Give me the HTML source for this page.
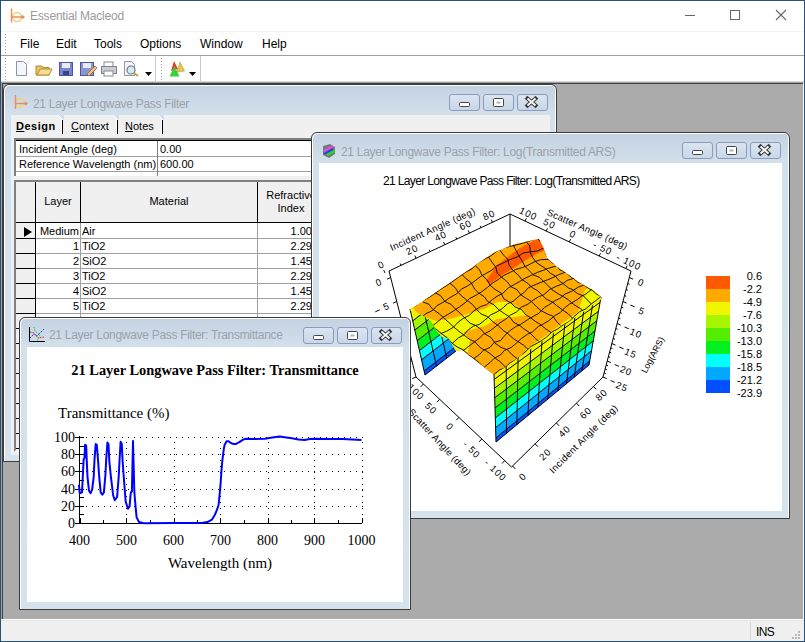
<!DOCTYPE html><html><head><meta charset="utf-8"><style>
*{margin:0;padding:0;box-sizing:border-box}
html,body{width:805px;height:642px;overflow:hidden;background:#fff;font-family:"Liberation Sans",sans-serif;position:relative}
.a{position:absolute}
.t{position:absolute;white-space:nowrap;line-height:1}
</style></head><body><div class="a" style="left:0;top:0;width:805px;height:642px;border:1px solid #2b5274"></div><svg class="a" style="left:8px;top:7px" width="18" height="18" viewBox="0 0 18 18"><circle cx="9" cy="10" r="4.5" fill="none" stroke="#f3d36a" stroke-width="1.5"/><path d="M3.5 1.5V15.5M3.5 10H16M14 8.5L16 10L14 11.5" stroke="#e88b6f" stroke-width="1.4" fill="none"/></svg><div class="t" style="left:30px;top:10px;font-size:12px;color:#9a9a9a;letter-spacing:-0.2px">Essential Macleod</div><div class="a" style="left:685px;top:15px;width:10px;height:1px;background:#666"></div><div class="a" style="left:730px;top:10px;width:10px;height:10px;border:1px solid #666"></div><svg class="a" style="left:775px;top:9px" width="12" height="12"><path d="M1 1L11 11M11 1L1 11" stroke="#666" stroke-width="1.1"/></svg><div class="a" style="left:1px;top:31px;width:803px;height:1px;background:#f1f3f8"></div><div class="a" style="left:5px;top:34px;width:1px;height:1px;background:#999"></div><div class="a" style="left:5px;top:37px;width:1px;height:1px;background:#999"></div><div class="a" style="left:5px;top:40px;width:1px;height:1px;background:#999"></div><div class="a" style="left:5px;top:43px;width:1px;height:1px;background:#999"></div><div class="a" style="left:5px;top:46px;width:1px;height:1px;background:#999"></div><div class="a" style="left:5px;top:49px;width:1px;height:1px;background:#999"></div><div class="a" style="left:5px;top:52px;width:1px;height:1px;background:#999"></div><div class="a" style="left:5px;top:55px;width:1px;height:1px;background:#999"></div><div class="t" style="left:20px;top:38px;font-size:12px;color:#000">File</div><div class="t" style="left:56px;top:38px;font-size:12px;color:#000">Edit</div><div class="t" style="left:94px;top:38px;font-size:12px;color:#000">Tools</div><div class="t" style="left:140px;top:38px;font-size:12px;color:#000">Options</div><div class="t" style="left:200px;top:38px;font-size:12px;color:#000">Window</div><div class="t" style="left:262px;top:38px;font-size:12px;color:#000">Help</div><div class="a" style="left:1px;top:55px;width:803px;height:1px;background:#a0a0a0"></div><div class="a" style="left:5px;top:58px;width:1px;height:1px;background:#999"></div><div class="a" style="left:161px;top:58px;width:1px;height:1px;background:#999"></div><div class="a" style="left:5px;top:61px;width:1px;height:1px;background:#999"></div><div class="a" style="left:161px;top:61px;width:1px;height:1px;background:#999"></div><div class="a" style="left:5px;top:64px;width:1px;height:1px;background:#999"></div><div class="a" style="left:161px;top:64px;width:1px;height:1px;background:#999"></div><div class="a" style="left:5px;top:67px;width:1px;height:1px;background:#999"></div><div class="a" style="left:161px;top:67px;width:1px;height:1px;background:#999"></div><div class="a" style="left:5px;top:70px;width:1px;height:1px;background:#999"></div><div class="a" style="left:161px;top:70px;width:1px;height:1px;background:#999"></div><div class="a" style="left:5px;top:73px;width:1px;height:1px;background:#999"></div><div class="a" style="left:161px;top:73px;width:1px;height:1px;background:#999"></div><div class="a" style="left:5px;top:76px;width:1px;height:1px;background:#999"></div><div class="a" style="left:161px;top:76px;width:1px;height:1px;background:#999"></div><div class="a" style="left:5px;top:79px;width:1px;height:1px;background:#999"></div><div class="a" style="left:161px;top:79px;width:1px;height:1px;background:#999"></div><div class="a" style="left:155px;top:56px;width:1px;height:25px;background:#c8c8c8"></div><div class="a" style="left:200px;top:56px;width:1px;height:25px;background:#c8c8c8"></div><svg class="a" style="left:14px;top:60px" width="190" height="20"><path d="M2.5 1.5H9.5L12.5 4.5V15.5H2.5Z" fill="#f4f6fb" stroke="#8b93aa"/><path d="M22 6H28L29 7.5H35V15H22Z" fill="#e9c46a" stroke="#b58a2c"/><path d="M23 15L26 9H38L35 15Z" fill="#f6dd92" stroke="#b58a2c"/><rect x="45.5" y="2.5" width="13" height="13" fill="#7c86cc" stroke="#4b55a0"/><rect x="48" y="3" width="8" height="5" fill="#e8ebf5"/><rect x="49" y="11" width="6" height="4" fill="#3c4580"/><rect x="66.5" y="2.5" width="13" height="13" fill="#8c96d0" stroke="#4b55a0"/><rect x="69" y="3" width="8" height="5" fill="#e8ebf5"/><path d="M73 14L81 6L83 8L75 16Z" fill="#f0c080" stroke="#a0603a" stroke-width="0.8"/><rect x="90" y="2" width="9" height="5" fill="#fff" stroke="#888"/><rect x="87.5" y="6.5" width="15" height="7" fill="#c9cdd4" stroke="#7d828a"/><rect x="90" y="11" width="9" height="5" fill="#fff" stroke="#888"/><path d="M110.5 1.5H117.5L120.5 4.5V15.5H110.5Z" fill="#f4f6fb" stroke="#8b93aa"/><circle cx="117" cy="10" r="4" fill="#dbe9f6" stroke="#777" stroke-width="1.2"/><path d="M120 13L124 16" stroke="#c9a040" stroke-width="2"/><path d="M131 12H138L134.5 16Z" fill="#000"/><path d="M163 12L166 2L170.5 11Z" fill="#e2c94e" stroke="#b09a30" stroke-width="0.6"/><path d="M157 11L160 1L164 9Z" fill="#e03a2a"/><path d="M155.5 16.5L160.5 6L165.5 16.5Z" fill="#3ad23a"/><path d="M175 12H182L178.5 16Z" fill="#000"/></svg><div class="a" style="left:1px;top:81px;width:803px;height:1px;background:#d9d9d9"></div><div class="a" style="left:1px;top:82px;width:803px;height:537px;background:#ababab;border-top:1px solid #a0a0a0;border-left:1px solid #a0a0a0;border-right:1px solid #fff"></div><div class="a" style="left:2px;top:83px;width:801px;height:1px;background:#404040"></div><div class="a" style="left:2px;top:83px;width:1px;height:536px;background:#404040"></div><div class="a" style="left:1px;top:619px;width:803px;height:22px;background:#f0f0f0;border-top:1px solid #fff"></div><div class="a" style="left:1px;top:620px;width:803px;height:1px;background:#e3e3e3"></div><div class="a" style="left:750px;top:622px;width:1px;height:18px;background:#d7d7d7"></div><div class="t" style="left:756px;top:626px;font-size:12px;color:#000;letter-spacing:-0.6px">INS</div><div class="a" style="left:798px;top:637px;width:2px;height:2px;background:#b8b8b8"></div><div class="a" style="left:798px;top:634px;width:2px;height:2px;background:#b8b8b8"></div><div class="a" style="left:798px;top:631px;width:2px;height:2px;background:#b8b8b8"></div><div class="a" style="left:795px;top:637px;width:2px;height:2px;background:#b8b8b8"></div><div class="a" style="left:795px;top:634px;width:2px;height:2px;background:#b8b8b8"></div><div class="a" style="left:792px;top:637px;width:2px;height:2px;background:#b8b8b8"></div><div class="a" style="left:3px;top:84px;width:554px;height:378px;border:1px solid #3c3c3c;border-radius:6px 6px 0 0;background:linear-gradient(#c3d1e2,#d3e1ec 30px,#d6e3ec);box-shadow:inset 1px 1px 0 #fff,inset -1px 0 0 #fff"></div><div class="t" style="left:33px;top:98px;font-size:12px;color:#9aa2aa;letter-spacing:-0.3px">21 Layer Longwave Pass Filter</div><div class="a" style="left:449px;top:94px;width:31px;height:17px;border:1px solid #8a9bbf;border-radius:3px;background:linear-gradient(#dbe5f1,#c8d6e6)"></div><div class="a" style="left:483px;top:94px;width:31px;height:17px;border:1px solid #8a9bbf;border-radius:3px;background:linear-gradient(#dbe5f1,#c8d6e6)"></div><div class="a" style="left:517px;top:94px;width:31px;height:17px;border:1px solid #8a9bbf;border-radius:3px;background:linear-gradient(#dbe5f1,#c8d6e6)"></div><svg class="a" style="left:449px;top:94px" width="100" height="17"><rect x="10.5" y="8.5" width="10" height="4" fill="#fff" stroke="#444" rx="1"/><rect x="44.5" y="4.5" width="10" height="8" fill="#fff" stroke="#444" rx="1"/><rect x="47.5" y="7.5" width="4" height="2" fill="#a7b3c7"/><path d="M78.5 4.5L86.5 11.5M86.5 4.5L78.5 11.5" stroke="#3a3a3a" stroke-width="4" stroke-linecap="square"/><path d="M78.5 4.5L86.5 11.5M86.5 4.5L78.5 11.5" stroke="#f8f8f8" stroke-width="2"/></svg><svg class="a" style="left:11px;top:93px" width="18" height="18"><circle cx="9" cy="10" r="4.5" fill="none" stroke="#f3d36a" stroke-width="1.5"/><path d="M4.5 2V16M4.5 10.5H16M14 9L16 10.5L14 12" stroke="#e88b6f" stroke-width="1.4" fill="none"/></svg><div class="a" style="left:11px;top:115px;width:539px;height:340px;background:#f0f0f0"></div><svg class="a" style="left:58px;top:115px" width="6" height="6"><path d="M0 0H6V6Z" fill="#d3e0ea"/><path d="M0 0L5 5" stroke="#fff" stroke-width="1"/></svg><svg class="a" style="left:113px;top:115px" width="6" height="6"><path d="M0 0H6V6Z" fill="#d3e0ea"/><path d="M0 0L5 5" stroke="#fff" stroke-width="1"/></svg><svg class="a" style="left:158px;top:115px" width="6" height="6"><path d="M0 0H6V6Z" fill="#d3e0ea"/><path d="M0 0L5 5" stroke="#fff" stroke-width="1"/></svg><div class="t" style="left:16px;top:121px;font-size:11px;font-weight:bold;color:#000;letter-spacing:0.5px"><u>D</u>esign</div><div class="t" style="left:71px;top:121px;font-size:11px;color:#000"><u>C</u>ontext</div><div class="t" style="left:125px;top:121px;font-size:11px;color:#000"><u>N</u>otes</div><div class="a" style="left:62px;top:120px;width:1px;height:14px;background:#000"></div><div class="a" style="left:61px;top:120px;width:1px;height:14px;background:#fff"></div><div class="a" style="left:117px;top:120px;width:1px;height:14px;background:#000"></div><div class="a" style="left:116px;top:120px;width:1px;height:14px;background:#fff"></div><div class="a" style="left:162px;top:120px;width:1px;height:14px;background:#000"></div><div class="a" style="left:161px;top:120px;width:1px;height:14px;background:#fff"></div><div class="a" style="left:14px;top:138px;width:300px;height:38px;background:#fff;border-top:2px solid #808080;border-left:2px solid #808080"></div><div class="a" style="left:16px;top:140px;width:298px;height:1px;background:#000"></div><div class="a" style="left:16px;top:156px;width:298px;height:1px;background:#a0a0a0"></div><div class="a" style="left:16px;top:171px;width:298px;height:1px;background:#a0a0a0"></div><div class="a" style="left:157px;top:141px;width:1px;height:35px;background:#808080"></div><div class="t" style="left:19px;top:144px;font-size:11px;color:#000">Incident Angle (deg)</div><div class="t" style="left:160px;top:144px;font-size:11px;color:#000">0.00</div><div class="t" style="left:19px;top:159px;font-size:11px;color:#000">Reference Wavelength (nm)</div><div class="t" style="left:160px;top:159px;font-size:11px;color:#000">600.00</div><div class="a" style="left:14px;top:180px;width:300px;height:272px;background:#fff;border-top:2px solid #808080;border-left:2px solid #808080;border-bottom:2px solid #fff"></div><div class="a" style="left:16px;top:182px;width:298px;height:41px;background:#f0f0f0"></div><div class="a" style="left:16px;top:182px;width:19px;height:268px;background:#f0f0f0"></div><div class="a" style="left:16px;top:222px;width:298px;height:1px;background:#000"></div><div class="a" style="left:35px;top:182px;width:1px;height:41px;background:#000"></div><div class="a" style="left:80px;top:182px;width:1px;height:41px;background:#000"></div><div class="a" style="left:257px;top:182px;width:1px;height:41px;background:#000"></div><div class="a" style="left:35px;top:223px;width:1px;height:227px;background:#000"></div><div class="a" style="left:80px;top:223px;width:1px;height:227px;background:#a0a0a0"></div><div class="a" style="left:257px;top:223px;width:1px;height:227px;background:#a0a0a0"></div><div class="a" style="left:36px;top:238px;width:278px;height:1px;background:#a0a0a0"></div><div class="a" style="left:16px;top:238px;width:19px;height:1px;background:#000"></div><div class="t" style="left:36px;top:226px;width:43px;text-align:right;font-size:11px;color:#000">Medium</div><div class="t" style="left:82px;top:226px;font-size:11px;color:#000">Air</div><div class="t" style="left:257px;top:226px;width:55px;text-align:right;font-size:11px;color:#000">1.00</div><div class="a" style="left:36px;top:253px;width:278px;height:1px;background:#a0a0a0"></div><div class="a" style="left:16px;top:253px;width:19px;height:1px;background:#000"></div><div class="t" style="left:36px;top:241px;width:43px;text-align:right;font-size:11px;color:#000">1</div><div class="t" style="left:82px;top:241px;font-size:11px;color:#000">TiO2</div><div class="t" style="left:257px;top:241px;width:55px;text-align:right;font-size:11px;color:#000">2.29</div><div class="a" style="left:36px;top:268px;width:278px;height:1px;background:#a0a0a0"></div><div class="a" style="left:16px;top:268px;width:19px;height:1px;background:#000"></div><div class="t" style="left:36px;top:256px;width:43px;text-align:right;font-size:11px;color:#000">2</div><div class="t" style="left:82px;top:256px;font-size:11px;color:#000">SiO2</div><div class="t" style="left:257px;top:256px;width:55px;text-align:right;font-size:11px;color:#000">1.45</div><div class="a" style="left:36px;top:283px;width:278px;height:1px;background:#a0a0a0"></div><div class="a" style="left:16px;top:283px;width:19px;height:1px;background:#000"></div><div class="t" style="left:36px;top:271px;width:43px;text-align:right;font-size:11px;color:#000">3</div><div class="t" style="left:82px;top:271px;font-size:11px;color:#000">TiO2</div><div class="t" style="left:257px;top:271px;width:55px;text-align:right;font-size:11px;color:#000">2.29</div><div class="a" style="left:36px;top:298px;width:278px;height:1px;background:#a0a0a0"></div><div class="a" style="left:16px;top:298px;width:19px;height:1px;background:#000"></div><div class="t" style="left:36px;top:286px;width:43px;text-align:right;font-size:11px;color:#000">4</div><div class="t" style="left:82px;top:286px;font-size:11px;color:#000">SiO2</div><div class="t" style="left:257px;top:286px;width:55px;text-align:right;font-size:11px;color:#000">1.45</div><div class="a" style="left:36px;top:313px;width:278px;height:1px;background:#a0a0a0"></div><div class="a" style="left:16px;top:313px;width:19px;height:1px;background:#000"></div><div class="t" style="left:36px;top:301px;width:43px;text-align:right;font-size:11px;color:#000">5</div><div class="t" style="left:82px;top:301px;font-size:11px;color:#000">TiO2</div><div class="t" style="left:257px;top:301px;width:55px;text-align:right;font-size:11px;color:#000">2.29</div><div class="a" style="left:36px;top:328px;width:278px;height:1px;background:#a0a0a0"></div><div class="a" style="left:16px;top:328px;width:19px;height:1px;background:#000"></div><div class="t" style="left:36px;top:316px;width:43px;text-align:right;font-size:11px;color:#000">6</div><div class="t" style="left:82px;top:316px;font-size:11px;color:#000">SiO2</div><div class="t" style="left:257px;top:316px;width:55px;text-align:right;font-size:11px;color:#000">1.45</div><div class="a" style="left:36px;top:343px;width:278px;height:1px;background:#a0a0a0"></div><div class="a" style="left:16px;top:343px;width:19px;height:1px;background:#000"></div><div class="t" style="left:36px;top:331px;width:43px;text-align:right;font-size:11px;color:#000">7</div><div class="t" style="left:82px;top:331px;font-size:11px;color:#000">TiO2</div><div class="t" style="left:257px;top:331px;width:55px;text-align:right;font-size:11px;color:#000">2.29</div><div class="a" style="left:36px;top:358px;width:278px;height:1px;background:#a0a0a0"></div><div class="a" style="left:16px;top:358px;width:19px;height:1px;background:#000"></div><div class="t" style="left:36px;top:346px;width:43px;text-align:right;font-size:11px;color:#000">8</div><div class="t" style="left:82px;top:346px;font-size:11px;color:#000">SiO2</div><div class="t" style="left:257px;top:346px;width:55px;text-align:right;font-size:11px;color:#000">1.45</div><div class="a" style="left:36px;top:373px;width:278px;height:1px;background:#a0a0a0"></div><div class="a" style="left:16px;top:373px;width:19px;height:1px;background:#000"></div><div class="t" style="left:36px;top:361px;width:43px;text-align:right;font-size:11px;color:#000">9</div><div class="t" style="left:82px;top:361px;font-size:11px;color:#000">TiO2</div><div class="t" style="left:257px;top:361px;width:55px;text-align:right;font-size:11px;color:#000">2.29</div><div class="a" style="left:36px;top:388px;width:278px;height:1px;background:#a0a0a0"></div><div class="a" style="left:16px;top:388px;width:19px;height:1px;background:#000"></div><div class="t" style="left:36px;top:376px;width:43px;text-align:right;font-size:11px;color:#000">10</div><div class="t" style="left:82px;top:376px;font-size:11px;color:#000">SiO2</div><div class="t" style="left:257px;top:376px;width:55px;text-align:right;font-size:11px;color:#000">1.45</div><div class="a" style="left:36px;top:403px;width:278px;height:1px;background:#a0a0a0"></div><div class="a" style="left:16px;top:403px;width:19px;height:1px;background:#000"></div><div class="t" style="left:36px;top:391px;width:43px;text-align:right;font-size:11px;color:#000">11</div><div class="t" style="left:82px;top:391px;font-size:11px;color:#000">TiO2</div><div class="t" style="left:257px;top:391px;width:55px;text-align:right;font-size:11px;color:#000">2.29</div><div class="a" style="left:36px;top:418px;width:278px;height:1px;background:#a0a0a0"></div><div class="a" style="left:16px;top:418px;width:19px;height:1px;background:#000"></div><div class="t" style="left:36px;top:406px;width:43px;text-align:right;font-size:11px;color:#000">12</div><div class="t" style="left:82px;top:406px;font-size:11px;color:#000">SiO2</div><div class="t" style="left:257px;top:406px;width:55px;text-align:right;font-size:11px;color:#000">1.45</div><div class="a" style="left:36px;top:433px;width:278px;height:1px;background:#a0a0a0"></div><div class="a" style="left:16px;top:433px;width:19px;height:1px;background:#000"></div><div class="t" style="left:36px;top:421px;width:43px;text-align:right;font-size:11px;color:#000">13</div><div class="t" style="left:82px;top:421px;font-size:11px;color:#000">TiO2</div><div class="t" style="left:257px;top:421px;width:55px;text-align:right;font-size:11px;color:#000">2.29</div><div class="a" style="left:36px;top:448px;width:278px;height:1px;background:#a0a0a0"></div><div class="a" style="left:16px;top:448px;width:19px;height:1px;background:#000"></div><div class="t" style="left:36px;top:436px;width:43px;text-align:right;font-size:11px;color:#000">14</div><div class="t" style="left:82px;top:436px;font-size:11px;color:#000">SiO2</div><div class="t" style="left:257px;top:436px;width:55px;text-align:right;font-size:11px;color:#000">1.45</div><svg class="a" style="left:23px;top:226px" width="10" height="12"><path d="M1 1L9 6L1 11Z" fill="#000"/></svg><div class="t" style="left:36px;top:196px;width:44px;text-align:center;font-size:11px;color:#000">Layer</div><div class="t" style="left:81px;top:196px;width:176px;text-align:center;font-size:11px;color:#000">Material</div><div class="t" style="left:256px;top:189px;width:70px;text-align:center;font-size:11px;line-height:13px;color:#000">Refractive<br>Index</div><div class="a" style="left:311px;top:132px;width:479px;height:387px;border:1px solid #3c3c3c;border-radius:6px 6px 0 0;background:linear-gradient(#c3d1e2,#d3e1ec 30px,#d6e3ec);box-shadow:inset 1px 1px 0 #fff,inset -1px 0 0 #fff"></div><svg class="a" style="left:321px;top:143px" width="16" height="16"><path d="M2 3L9 1L14 4L14 11L8 15L2 12Z" fill="#777"/><path d="M3 8L12 3" stroke="#ff40ff" stroke-width="2"/><path d="M3 11L12 6" stroke="#2040ff" stroke-width="2"/><path d="M6 12L14 8" stroke="#20e020" stroke-width="2"/></svg><div class="t" style="left:341px;top:146px;font-size:12px;color:#9aa2aa;letter-spacing:-0.3px">21 Layer Longwave Pass Filter: Log(Transmitted ARS)</div><div class="a" style="left:682px;top:142px;width:31px;height:17px;border:1px solid #8a9bbf;border-radius:3px;background:linear-gradient(#dbe5f1,#c8d6e6)"></div><div class="a" style="left:716px;top:142px;width:31px;height:17px;border:1px solid #8a9bbf;border-radius:3px;background:linear-gradient(#dbe5f1,#c8d6e6)"></div><div class="a" style="left:750px;top:142px;width:31px;height:17px;border:1px solid #8a9bbf;border-radius:3px;background:linear-gradient(#dbe5f1,#c8d6e6)"></div><svg class="a" style="left:682px;top:142px" width="100" height="17"><rect x="10.5" y="8.5" width="10" height="4" fill="#fff" stroke="#444" rx="1"/><rect x="44.5" y="4.5" width="10" height="8" fill="#fff" stroke="#444" rx="1"/><rect x="47.5" y="7.5" width="4" height="2" fill="#a7b3c7"/><path d="M78.5 4.5L86.5 11.5M86.5 4.5L78.5 11.5" stroke="#3a3a3a" stroke-width="4" stroke-linecap="square"/><path d="M78.5 4.5L86.5 11.5M86.5 4.5L78.5 11.5" stroke="#f8f8f8" stroke-width="2"/></svg><div class="a" style="left:319px;top:163px;width:463px;height:348px;background:#fff"></div><div class="t" style="left:383px;top:175px;font-size:12px;color:#000;letter-spacing:-0.65px">21 Layer Longwave Pass Filter: Log(Transmitted ARS)</div><svg class="a" style="left:319px;top:163px" width="463" height="348"><g transform="translate(-319,-163)"><path d="M389 271L510 214L631 271M510 214V246M389 271L416 377L511.5 467L603 377L631 271" stroke="#000" stroke-width="1" fill="none"/><clipPath id="wl"><polygon points="409.0,308.0 440.0,300.0 470.0,330.0 457.0,352.0 424.0,376.0"/></clipPath><g clip-path="url(#wl)"><polygon points="410.0,309.0 441.0,285.0 443.7,296.9 412.7,320.9" fill="#f0f500"/><polygon points="412.7,320.9 443.7,296.9 445.8,306.1 414.8,330.1" fill="#a8f500"/><polygon points="414.8,330.1 445.8,306.1 448.2,316.7 417.2,340.7" fill="#55ee00"/><polygon points="417.2,340.7 448.2,316.7 450.4,326.6 419.4,350.6" fill="#00f020"/><polygon points="419.4,350.6 450.4,326.6 452.6,335.8 421.6,359.8" fill="#00ffff"/><polygon points="421.6,359.8 452.6,335.8 455.1,347.0 424.1,371.0" fill="#00a8ff"/><polygon points="424.1,371.0 455.1,347.0 456.0,351.0 425.0,375.0" fill="#0050ff"/><path d="M412.7 320.9L443.7 296.9M414.8 330.1L445.8 306.1M417.2 340.7L448.2 316.7M419.4 350.6L450.4 326.6M421.6 359.8L452.6 335.8M424.1 371.0L455.1 347.0M421.5 300.1L436.5 366.1M431.7 292.2L446.7 358.2" stroke="#000" stroke-width="1" fill="none"/></g><path d="M410 309L425 375L456 351" stroke="#000" stroke-width="1" fill="none"/><polygon points="494.0,374.0 601.0,297.0 598.5,311.3 494.4,388.3" fill="#f0f500"/><polygon points="494.4,388.3 598.5,311.3 596.8,320.8 494.7,397.8" fill="#a8f500"/><polygon points="494.7,397.8 596.8,320.8 595.0,331.0 495.0,408.0" fill="#55ee00"/><polygon points="495.0,408.0 595.0,331.0 593.3,340.9 495.3,417.9" fill="#00f020"/><polygon points="495.3,417.9 593.3,340.9 591.5,350.7 495.6,427.7" fill="#00ffff"/><polygon points="495.6,427.7 591.5,350.7 589.7,360.9 495.9,437.9" fill="#00a8ff"/><polygon points="495.9,437.9 589.7,360.9 589.0,365.0 496.0,442.0" fill="#0050ff"/><path d="M494.2 379.4L600.0 302.4M494.4 388.3L598.5 311.3M494.7 397.8L596.8 320.8M495.0 408.0L595.0 331.0M495.3 417.9L593.3 340.9M495.6 427.7L591.5 350.7M495.9 437.9L589.7 360.9M494.0 374.0L496.0 442.0M506.2 365.2L506.6 433.2M518.1 356.7L516.9 424.7M530.8 347.5L528.0 415.5M542.1 339.4L537.9 407.4M553.6 331.1L547.8 399.1M565.0 322.9L557.8 390.9M575.1 315.6L566.5 383.6M584.0 309.2L574.2 377.2M592.9 302.9L581.9 370.9M601.0 297.0L589.0 365.0M496 442L589 365" stroke="#000" stroke-width="1" fill="none"/><clipPath id="ts"><polygon points="410.0,310.0 493.0,253.0 515.0,244.0 539.0,239.0 543.0,247.0 547.0,258.0 556.0,266.0 569.0,275.0 580.0,283.0 593.0,290.0 601.0,297.0 601.0,299.0 494.0,375.0 462.0,350.0 456.0,351.0 448.6,338.6 442.0,337.0 436.0,330.0 431.0,321.0 423.7,316.0"/></clipPath><polygon points="410.0,310.0 493.0,253.0 515.0,244.0 539.0,239.0 543.0,247.0 547.0,258.0 556.0,266.0 569.0,275.0 580.0,283.0 593.0,290.0 601.0,297.0 601.0,299.0 494.0,375.0 462.0,350.0 456.0,351.0 448.6,338.6 442.0,337.0 436.0,330.0 431.0,321.0 423.7,316.0" fill="#ffaa00"/><g clip-path="url(#ts)"><polygon points="486.0,281.0 497.0,265.0 520.0,248.0 535.0,240.0 541.0,238.0 546.0,250.0 536.0,254.0 523.0,262.0 499.0,277.0 490.0,284.0" fill="#ff5a00"/><polygon points="405.0,305.0 423.0,316.0 436.0,321.0 452.0,318.6 485.0,308.7 497.0,302.0 508.0,302.0 520.0,308.0 527.0,315.0 515.0,317.0 497.0,319.0 485.0,326.0 463.6,332.0 470.0,340.0 468.0,352.0 450.0,352.0 440.0,335.0 420.0,330.0" fill="#f0f500"/><polygon points="601.0,280.0 601.0,302.0 590.0,312.0 570.0,325.0 545.0,345.0 525.0,360.0 520.0,357.0 540.0,340.0 560.0,325.0 578.0,312.0 582.0,300.0 585.0,290.0" fill="#f0f500"/><polygon points="528.0,356.0 560.0,334.0 590.0,310.0 601.0,301.0 601.0,297.0 590.0,303.0 560.0,326.0 525.0,350.0" fill="#f0f500"/><polygon points="395.0,300.0 412.0,306.0 420.0,318.0 410.0,326.0" fill="#f0f500"/><path d="M409.4 310.1L414.9 314.3L420.8 317.1L424.6 323.0L430.4 325.6L437.4 330.2L442.3 334.3L447.1 337.6L452.3 343.4L457.3 347.1L462.9 349.6L468.4 354.9L472.5 357.6L479.1 362.7L484.0 367.8L489.3 371.9L493.7 375.7M423.0 302.0L429.0 304.3L432.2 308.8L439.1 313.6L443.3 317.5L448.2 321.8L453.0 326.4L458.8 331.2L464.2 335.3L469.8 339.5L474.6 341.6L480.3 347.6L485.6 350.6L490.4 353.8L495.9 358.6L499.8 361.5L506.3 367.8M435.1 292.8L440.6 295.7L445.0 301.6L451.0 304.3L455.1 308.7L460.5 313.5L465.9 319.2L470.2 323.3L474.9 325.1L480.8 329.1L485.0 334.0L491.1 337.5L495.0 343.2L500.9 347.3L507.5 349.9L511.6 354.3L517.1 358.7M449.7 283.1L455.1 287.5L458.3 292.6L462.1 296.3L468.3 301.4L472.3 304.3L477.0 309.9L481.1 314.0L487.7 316.7L492.9 321.7L498.1 325.5L503.3 330.5L506.8 332.8L513.6 338.8L517.8 341.4L523.7 345.3L528.1 349.4M461.9 274.4L465.9 278.6L471.2 282.6L474.7 289.2L478.3 292.7L484.4 296.9L487.8 301.6L494.1 304.9L498.3 309.4L504.6 313.7L509.8 317.1L513.6 322.3L520.1 325.7L523.7 328.7L529.7 332.7L535.3 338.4L538.7 341.3M475.6 265.8L479.6 270.0L481.8 274.9L487.1 279.9L490.0 285.1L495.0 289.4L501.0 293.0L503.9 298.9L511.0 303.0L515.0 307.0L521.2 309.3L525.8 314.8L530.8 317.9L535.1 321.2L540.2 324.3L545.9 329.0L551.3 332.7M488.6 257.2L492.4 262.8L495.9 267.2L497.1 272.8L501.2 276.8L507.1 281.7L511.3 287.0L516.8 289.5L520.9 294.8L526.5 298.6L531.1 301.2L536.6 306.8L540.8 310.5L547.8 314.2L552.8 316.0L557.2 322.3L560.5 325.2M499.8 250.1L503.6 255.1L507.7 259.2L509.0 264.9L512.5 269.9L519.2 276.0L521.7 279.4L527.2 282.9L532.2 287.6L537.7 290.8L541.6 294.6L546.4 299.2L552.9 302.4L556.5 305.4L562.4 309.9L568.0 313.6L572.7 318.4M512.8 244.5L516.1 250.5L518.8 255.7L521.6 260.0L524.8 266.2L528.2 269.7L533.5 274.9L539.6 277.4L544.3 282.1L547.6 285.1L552.0 289.7L558.0 293.7L563.3 296.6L568.2 299.7L571.8 303.0L576.1 306.0L582.5 309.9M525.2 240.7L529.9 245.9L530.4 252.7L532.9 257.9L536.9 262.9L541.9 266.2L545.8 268.7L550.4 273.3L554.9 275.7L559.6 281.2L562.6 283.2L568.4 287.9L572.4 289.5L577.4 293.5L583.5 295.9L587.0 299.8L591.2 303.7M538.0 239.0L542.6 243.7L544.3 248.1L546.0 254.6L548.3 258.9L552.0 262.8L557.1 265.2L559.6 269.8L566.1 272.3L569.4 275.9L573.2 278.1L577.7 282.1L582.7 284.0L588.4 288.3L592.2 290.3L596.7 294.2L601.2 296.4M409.3 308.9L416.1 305.5L421.5 301.2L428.0 298.0L433.7 294.3L440.7 289.2L446.8 285.5L453.8 280.6L459.1 276.8L466.1 271.8L472.0 268.9L477.5 263.0L483.0 259.9L490.2 256.3L497.2 251.0L502.5 248.2L509.4 246.5L518.0 244.5L523.8 242.9L531.3 240.3L539.5 238.0M419.5 318.9L425.9 313.7L432.5 310.5L437.0 305.6L443.9 301.9L449.2 298.1L456.9 293.6L461.8 288.9L467.1 286.2L472.6 282.6L480.4 276.7L486.3 273.3L491.8 270.2L496.6 265.9L503.6 262.8L509.2 259.9L517.5 256.8L523.1 253.0L529.9 251.9L537.3 251.0L543.8 248.1M431.3 326.6L435.8 323.3L442.6 317.6L448.9 313.8L453.0 311.3L459.3 307.0L465.0 302.9L469.8 298.4L474.9 295.8L482.1 291.5L487.7 287.2L492.2 283.4L499.3 278.7L504.0 275.3L510.5 272.2L515.6 269.5L522.3 267.6L528.1 265.2L534.0 262.0L540.5 259.7L548.6 259.4M440.7 333.6L446.8 331.1L453.3 327.3L458.3 322.0L463.4 318.3L469.2 315.4L474.0 310.8L480.9 306.4L486.5 304.7L492.4 299.6L497.0 296.3L502.7 293.4L508.4 287.9L514.3 284.5L519.5 281.7L524.0 278.8L531.6 275.2L537.4 272.4L542.9 270.4L548.7 268.2L556.5 265.9M452.2 343.6L458.4 337.8L463.7 335.1L467.4 330.6L473.4 326.1L479.6 324.3L484.6 320.3L491.0 314.7L496.9 312.0L502.5 308.4L507.6 303.7L513.2 301.3L518.9 296.2L524.1 292.5L528.2 287.9L534.0 285.2L540.1 282.7L547.3 279.9L552.8 277.6L558.5 274.7L565.7 272.1M461.7 351.6L468.5 346.5L473.1 343.0L479.1 338.4L483.1 334.5L490.5 330.5L495.2 326.8L500.0 322.9L505.9 319.0L510.5 315.0L516.3 312.1L521.5 307.1L527.9 304.2L534.0 299.5L538.8 296.7L543.7 294.8L549.9 289.4L556.3 286.3L562.5 283.9L567.2 280.4L574.5 278.1M473.7 358.7L479.5 354.4L483.3 350.4L490.0 347.4L494.3 342.3L500.6 340.5L505.8 334.3L509.9 330.7L515.6 326.7L520.8 324.3L528.2 319.3L533.8 316.1L538.9 313.3L544.6 307.3L548.6 305.0L555.8 300.2L559.8 298.5L565.0 294.0L571.3 291.5L578.4 287.1L583.7 285.2M484.3 367.0L489.9 362.6L494.1 358.4L500.4 355.0L504.6 350.3L511.1 347.5L516.5 343.0L521.4 338.5L527.4 334.3L532.2 332.1L538.2 326.6L542.5 324.4L548.9 320.6L554.9 315.6L560.4 312.4L564.6 307.8L569.5 304.1L577.1 299.7L581.8 296.1L586.2 293.8L592.1 288.8M493.2 375.3L499.6 369.9L504.1 368.3L509.4 363.4L515.2 360.1L521.0 356.2L526.2 350.9L530.7 346.7L537.6 342.9L541.0 341.0L546.8 336.9L551.9 332.0L557.5 329.0L563.8 324.6L569.5 321.3L573.9 316.7L579.5 311.7L585.8 308.9L591.1 304.1L595.7 300.8L601.5 296.0" stroke="#000" stroke-width="0.9" fill="none"/></g><text x="381.0" y="264.5" font-family="Liberation Sans" fill="#000" font-size="9.5" letter-spacing="0.9" text-anchor="middle" dominant-baseline="central" transform="rotate(-25.0 381.0 264.5)">0</text><text x="412.0" y="249.5" font-family="Liberation Sans" fill="#000" font-size="9.5" letter-spacing="0.9" text-anchor="middle" dominant-baseline="central" transform="rotate(-25.0 412.0 249.5)">20</text><text x="440.6" y="235.9" font-family="Liberation Sans" fill="#000" font-size="9.5" letter-spacing="0.9" text-anchor="middle" dominant-baseline="central" transform="rotate(-25.0 440.6 235.9)">40</text><text x="465.5" y="224.8" font-family="Liberation Sans" fill="#000" font-size="9.5" letter-spacing="0.9" text-anchor="middle" dominant-baseline="central" transform="rotate(-25.0 465.5 224.8)">60</text><text x="489.0" y="214.8" font-family="Liberation Sans" fill="#000" font-size="9.5" letter-spacing="0.9" text-anchor="middle" dominant-baseline="central" transform="rotate(-25.0 489.0 214.8)">80</text><text x="432.6" y="229.0" font-family="Liberation Sans" fill="#000" font-size="9.5" letter-spacing="0.4" text-anchor="middle" dominant-baseline="central" transform="rotate(-24.0 432.6 229.0)">Incident Angle (deg)</text><text x="528.5" y="213.6" font-family="Liberation Sans" fill="#000" font-size="9.5" letter-spacing="0.9" text-anchor="middle" dominant-baseline="central" transform="rotate(25.0 528.5 213.6)">100</text><text x="549.7" y="223.5" font-family="Liberation Sans" fill="#000" font-size="9.5" letter-spacing="0.9" text-anchor="middle" dominant-baseline="central" transform="rotate(25.0 549.7 223.5)">50</text><text x="573.0" y="234.1" font-family="Liberation Sans" fill="#000" font-size="9.5" letter-spacing="0.9" text-anchor="middle" dominant-baseline="central" transform="rotate(25.0 573.0 234.1)">0</text><text x="602.9" y="248.0" font-family="Liberation Sans" fill="#000" font-size="9.5" letter-spacing="0.9" text-anchor="middle" dominant-baseline="central" transform="rotate(25.0 602.9 248.0)">- 50</text><text x="628.9" y="261.9" font-family="Liberation Sans" fill="#000" font-size="9.5" letter-spacing="0.9" text-anchor="middle" dominant-baseline="central" transform="rotate(25.0 628.9 261.9)">- 100</text><text x="587.5" y="229.0" font-family="Liberation Sans" fill="#000" font-size="9.5" letter-spacing="0.3" text-anchor="middle" dominant-baseline="central" transform="rotate(23.5 587.5 229.0)">Scatter Angle (deg)</text><text x="416.1" y="391.8" font-family="Liberation Sans" fill="#000" font-size="9.5" letter-spacing="0.9" text-anchor="middle" dominant-baseline="central" transform="rotate(44.0 416.1 391.8)">100</text><text x="431.2" y="408.3" font-family="Liberation Sans" fill="#000" font-size="9.5" letter-spacing="0.9" text-anchor="middle" dominant-baseline="central" transform="rotate(44.0 431.2 408.3)">50</text><text x="450.2" y="426.6" font-family="Liberation Sans" fill="#000" font-size="9.5" letter-spacing="0.9" text-anchor="middle" dominant-baseline="central" transform="rotate(44.0 450.2 426.6)">0</text><text x="471.8" y="449.5" font-family="Liberation Sans" fill="#000" font-size="9.5" letter-spacing="0.9" text-anchor="middle" dominant-baseline="central" transform="rotate(44.0 471.8 449.5)">- 50</text><text x="495.7" y="470.2" font-family="Liberation Sans" fill="#000" font-size="9.5" letter-spacing="0.9" text-anchor="middle" dominant-baseline="central" transform="rotate(44.0 495.7 470.2)">- 100</text><text x="440.0" y="442.0" font-family="Liberation Sans" fill="#000" font-size="9.5" letter-spacing="0.3" text-anchor="middle" dominant-baseline="central" transform="rotate(47.0 440.0 442.0)">Scatter Angle (deg)</text><text x="522.5" y="476.4" font-family="Liberation Sans" fill="#000" font-size="9.5" letter-spacing="0.9" text-anchor="middle" dominant-baseline="central" transform="rotate(-44.0 522.5 476.4)">0</text><text x="545.1" y="454.3" font-family="Liberation Sans" fill="#000" font-size="9.5" letter-spacing="0.9" text-anchor="middle" dominant-baseline="central" transform="rotate(-44.0 545.1 454.3)">20</text><text x="564.3" y="431.2" font-family="Liberation Sans" fill="#000" font-size="9.5" letter-spacing="0.9" text-anchor="middle" dominant-baseline="central" transform="rotate(-44.0 564.3 431.2)">40</text><text x="585.6" y="412.8" font-family="Liberation Sans" fill="#000" font-size="9.5" letter-spacing="0.9" text-anchor="middle" dominant-baseline="central" transform="rotate(-44.0 585.6 412.8)">60</text><text x="601.3" y="394.7" font-family="Liberation Sans" fill="#000" font-size="9.5" letter-spacing="0.9" text-anchor="middle" dominant-baseline="central" transform="rotate(-44.0 601.3 394.7)">80</text><text x="583.4" y="438.7" font-family="Liberation Sans" fill="#000" font-size="9.5" letter-spacing="0.4" text-anchor="middle" dominant-baseline="central" transform="rotate(-45.0 583.4 438.7)">Incident Angle (deg)</text><text x="641.3" y="282.5" font-family="Liberation Sans" fill="#000" font-size="9.5" letter-spacing="0.9" text-anchor="middle" dominant-baseline="central" transform="rotate(22.0 641.3 282.5)">0</text><text x="641.9" y="311.0" font-family="Liberation Sans" fill="#000" font-size="9.5" letter-spacing="0.9" text-anchor="middle" dominant-baseline="central" transform="rotate(22.0 641.9 311.0)">5</text><text x="636.1" y="333.0" font-family="Liberation Sans" fill="#000" font-size="9.5" letter-spacing="0.9" text-anchor="middle" dominant-baseline="central" transform="rotate(22.0 636.1 333.0)">10</text><text x="630.8" y="353.0" font-family="Liberation Sans" fill="#000" font-size="9.5" letter-spacing="0.9" text-anchor="middle" dominant-baseline="central" transform="rotate(22.0 630.8 353.0)">15</text><text x="626.2" y="370.5" font-family="Liberation Sans" fill="#000" font-size="9.5" letter-spacing="0.9" text-anchor="middle" dominant-baseline="central" transform="rotate(22.0 626.2 370.5)">20</text><text x="622.0" y="386.5" font-family="Liberation Sans" fill="#000" font-size="9.5" letter-spacing="0.9" text-anchor="middle" dominant-baseline="central" transform="rotate(22.0 622.0 386.5)">25</text><text x="652.8" y="355.0" font-family="Liberation Sans" fill="#000" font-size="9" letter-spacing="0" text-anchor="middle" dominant-baseline="central" transform="rotate(-62.0 652.8 355.0)">Log(ARS)</text><text x="378.7" y="282.0" font-family="Liberation Sans" fill="#000" font-size="9.5" letter-spacing="0.9" text-anchor="middle" dominant-baseline="central" transform="rotate(-22.0 378.7 282.0)">0</text><text x="386.3" y="306.2" font-family="Liberation Sans" fill="#000" font-size="9.5" letter-spacing="0.9" text-anchor="middle" dominant-baseline="central" transform="rotate(-22.0 386.3 306.2)">5</text><text x="391.9" y="328.2" font-family="Liberation Sans" fill="#000" font-size="9.5" letter-spacing="0.9" text-anchor="middle" dominant-baseline="central" transform="rotate(-22.0 391.9 328.2)">10</text><text x="397.0" y="348.2" font-family="Liberation Sans" fill="#000" font-size="9.5" letter-spacing="0.9" text-anchor="middle" dominant-baseline="central" transform="rotate(-22.0 397.0 348.2)">15</text><text x="401.4" y="365.7" font-family="Liberation Sans" fill="#000" font-size="9.5" letter-spacing="0.9" text-anchor="middle" dominant-baseline="central" transform="rotate(-22.0 401.4 365.7)">20</text><text x="405.5" y="381.7" font-family="Liberation Sans" fill="#000" font-size="9.5" letter-spacing="0.9" text-anchor="middle" dominant-baseline="central" transform="rotate(-22.0 405.5 381.7)">25</text><path d="M385.0 272.9l-1.3 -2.7M416.1 258.2l-1.3 -2.7M444.8 244.7l-1.3 -2.7M469.5 233.1l-1.3 -2.7M492.5 222.3l-1.3 -2.7M401.1 265.3l-0.9 -1.8M430.1 251.6l-0.9 -1.8M456.8 239.1l-0.9 -1.8M481.0 227.7l-0.9 -1.8M525.0 221.1l1.3 -2.7M546.2 231.0l1.3 -2.7M569.3 241.9l1.3 -2.7M599.2 256.0l1.3 -2.7M625.8 268.5l1.3 -2.7M423.4 384.0l-2.7 2.9M439.7 399.3l-2.7 2.9M458.9 417.4l-2.7 2.9M481.8 439.0l-2.7 2.9M504.7 460.6l-2.7 2.9M512.5 466.0l2.8 2.9M535.1 443.8l2.8 2.9M556.3 422.9l2.8 2.9M576.4 403.2l2.8 2.9M593.4 386.4l2.8 2.9M629.3 277.5l3.7 1.6M622.9 301.5l3.7 1.6M630.4 305.0l4.2 1.8M617.1 323.5l3.7 1.6M624.6 327.0l4.2 1.8M611.8 343.5l3.7 1.6M619.3 347.0l4.2 1.8M607.2 361.0l3.7 1.6M614.7 364.5l4.2 1.8M603.0 377.0l3.7 1.6M610.5 380.5l4.2 1.8M627.7 283.5l1.8 0.8M626.1 289.5l1.8 0.8M624.5 295.5l1.8 0.8M621.5 307.0l1.8 0.8M620.0 312.5l1.8 0.8M618.6 318.0l1.8 0.8M615.8 328.5l1.8 0.8M614.5 333.5l1.8 0.8M613.2 338.5l1.8 0.8M610.7 347.9l1.8 0.8M609.5 352.2l1.8 0.8M608.4 356.6l1.8 0.8M606.2 365.0l1.8 0.8M605.1 369.0l1.8 0.8M604.1 373.0l1.8 0.8M390.7 277.5l-3.7 1.6M396.8 301.5l-3.7 1.6M379.8 309.8l-4.5 2M402.4 323.5l-3.7 1.6M385.4 331.8l-4.5 2M407.5 343.5l-3.7 1.6M390.5 351.8l-4.5 2M411.9 361.0l-3.7 1.6M394.9 369.3l-4.5 2M416.0 377.0l-3.7 1.6M399.0 385.3l-4.5 2" stroke="#000" stroke-width="1" fill="none"/><rect x="706" y="276" width="24" height="13" fill="#ff5a00"/><rect x="706" y="289" width="24" height="13" fill="#ffaa00"/><rect x="706" y="302" width="24" height="13" fill="#f0f500"/><rect x="706" y="315" width="24" height="13" fill="#a8f500"/><rect x="706" y="328" width="24" height="13" fill="#55ee00"/><rect x="706" y="341" width="24" height="13" fill="#00f020"/><rect x="706" y="354" width="24" height="13" fill="#00ffff"/><rect x="706" y="367" width="24" height="13" fill="#00a8ff"/><rect x="706" y="380" width="24" height="13" fill="#0050ff"/><text x="762" y="276.0" font-family="Liberation Sans" font-size="11" fill="#000" text-anchor="end" dominant-baseline="central">0.6</text><text x="762" y="289.0" font-family="Liberation Sans" font-size="11" fill="#000" text-anchor="end" dominant-baseline="central">-2.2</text><text x="762" y="302.0" font-family="Liberation Sans" font-size="11" fill="#000" text-anchor="end" dominant-baseline="central">-4.9</text><text x="762" y="315.0" font-family="Liberation Sans" font-size="11" fill="#000" text-anchor="end" dominant-baseline="central">-7.6</text><text x="762" y="328.0" font-family="Liberation Sans" font-size="11" fill="#000" text-anchor="end" dominant-baseline="central">-10.3</text><text x="762" y="341.0" font-family="Liberation Sans" font-size="11" fill="#000" text-anchor="end" dominant-baseline="central">-13.0</text><text x="762" y="354.0" font-family="Liberation Sans" font-size="11" fill="#000" text-anchor="end" dominant-baseline="central">-15.8</text><text x="762" y="367.0" font-family="Liberation Sans" font-size="11" fill="#000" text-anchor="end" dominant-baseline="central">-18.5</text><text x="762" y="380.0" font-family="Liberation Sans" font-size="11" fill="#000" text-anchor="end" dominant-baseline="central">-21.2</text><text x="762" y="393.0" font-family="Liberation Sans" font-size="11" fill="#000" text-anchor="end" dominant-baseline="central">-23.9</text></g></svg><div class="a" style="left:19px;top:317px;width:392px;height:293px;border:1px solid #3c3c3c;border-radius:6px 6px 0 0;background:linear-gradient(#c3d1e2,#d3e1ec 30px,#d6e3ec);box-shadow:inset 1px 1px 0 #fff,inset -1px 0 0 #fff"></div><svg class="a" style="left:28px;top:326px" width="18" height="17"><path d="M1.5 1V15.5H17" stroke="#000" stroke-width="1" fill="none"/><path d="M2 12L6 8L9 10L16 3" stroke="#2020ff" stroke-width="1" stroke-dasharray="1.5 1" fill="none"/><path d="M2 6L6 7L10 12L16 11" stroke="#e02020" stroke-width="1" stroke-dasharray="1.5 1" fill="none"/><path d="M6 1L7 5L12 9L9 15" stroke="#20d020" stroke-width="1" stroke-dasharray="1.5 1" fill="none"/></svg><div class="t" style="left:49px;top:329px;font-size:12px;color:#9aa2aa;letter-spacing:-0.3px">21 Layer Longwave Pass Filter: Transmittance</div><div class="a" style="left:303px;top:327px;width:31px;height:17px;border:1px solid #8a9bbf;border-radius:3px;background:linear-gradient(#dbe5f1,#c8d6e6)"></div><div class="a" style="left:337px;top:327px;width:31px;height:17px;border:1px solid #8a9bbf;border-radius:3px;background:linear-gradient(#dbe5f1,#c8d6e6)"></div><div class="a" style="left:371px;top:327px;width:31px;height:17px;border:1px solid #8a9bbf;border-radius:3px;background:linear-gradient(#dbe5f1,#c8d6e6)"></div><svg class="a" style="left:303px;top:327px" width="100" height="17"><rect x="10.5" y="8.5" width="10" height="4" fill="#fff" stroke="#444" rx="1"/><rect x="44.5" y="4.5" width="10" height="8" fill="#fff" stroke="#444" rx="1"/><rect x="47.5" y="7.5" width="4" height="2" fill="#a7b3c7"/><path d="M78.5 4.5L86.5 11.5M86.5 4.5L78.5 11.5" stroke="#3a3a3a" stroke-width="4" stroke-linecap="square"/><path d="M78.5 4.5L86.5 11.5M86.5 4.5L78.5 11.5" stroke="#f8f8f8" stroke-width="2"/></svg><div class="a" style="left:27px;top:347px;width:376px;height:255px;background:#fff"></div><svg class="a" style="left:27px;top:347px" width="376" height="255"><g transform="translate(-27,-347)"><text x="215" y="375" font-family="Liberation Serif" font-weight="bold" font-size="14.4" text-anchor="middle" fill="#000">21 Layer Longwave Pass Filter: Transmittance</text><text x="58" y="418" font-family="Liberation Serif" font-size="15" fill="#000">Transmittance (%)</text><text x="220" y="568" font-family="Liberation Serif" font-size="15" text-anchor="middle" fill="#000">Wavelength (nm)</text><path d="M85 506h1M91 506h1M97 506h1M103 506h1M109 506h1M115 506h1M121 506h1M127 506h1M133 506h1M139 506h1M145 506h1M151 506h1M157 506h1M163 506h1M169 506h1M175 506h1M181 506h1M187 506h1M193 506h1M199 506h1M205 506h1M211 506h1M217 506h1M223 506h1M229 506h1M235 506h1M241 506h1M247 506h1M253 506h1M259 506h1M265 506h1M271 506h1M277 506h1M283 506h1M289 506h1M295 506h1M301 506h1M307 506h1M313 506h1M319 506h1M325 506h1M331 506h1M337 506h1M343 506h1M349 506h1M355 506h1M361 506h1M85 489h1M91 489h1M97 489h1M103 489h1M109 489h1M115 489h1M121 489h1M127 489h1M133 489h1M139 489h1M145 489h1M151 489h1M157 489h1M163 489h1M169 489h1M175 489h1M181 489h1M187 489h1M193 489h1M199 489h1M205 489h1M211 489h1M217 489h1M223 489h1M229 489h1M235 489h1M241 489h1M247 489h1M253 489h1M259 489h1M265 489h1M271 489h1M277 489h1M283 489h1M289 489h1M295 489h1M301 489h1M307 489h1M313 489h1M319 489h1M325 489h1M331 489h1M337 489h1M343 489h1M349 489h1M355 489h1M361 489h1M85 471h1M91 471h1M97 471h1M103 471h1M109 471h1M115 471h1M121 471h1M127 471h1M133 471h1M139 471h1M145 471h1M151 471h1M157 471h1M163 471h1M169 471h1M175 471h1M181 471h1M187 471h1M193 471h1M199 471h1M205 471h1M211 471h1M217 471h1M223 471h1M229 471h1M235 471h1M241 471h1M247 471h1M253 471h1M259 471h1M265 471h1M271 471h1M277 471h1M283 471h1M289 471h1M295 471h1M301 471h1M307 471h1M313 471h1M319 471h1M325 471h1M331 471h1M337 471h1M343 471h1M349 471h1M355 471h1M361 471h1M85 454h1M91 454h1M97 454h1M103 454h1M109 454h1M115 454h1M121 454h1M127 454h1M133 454h1M139 454h1M145 454h1M151 454h1M157 454h1M163 454h1M169 454h1M175 454h1M181 454h1M187 454h1M193 454h1M199 454h1M205 454h1M211 454h1M217 454h1M223 454h1M229 454h1M235 454h1M241 454h1M247 454h1M253 454h1M259 454h1M265 454h1M271 454h1M277 454h1M283 454h1M289 454h1M295 454h1M301 454h1M307 454h1M313 454h1M319 454h1M325 454h1M331 454h1M337 454h1M343 454h1M349 454h1M355 454h1M361 454h1M85 437h1M91 437h1M97 437h1M103 437h1M109 437h1M115 437h1M121 437h1M127 437h1M133 437h1M139 437h1M145 437h1M151 437h1M157 437h1M163 437h1M169 437h1M175 437h1M181 437h1M187 437h1M193 437h1M199 437h1M205 437h1M211 437h1M217 437h1M223 437h1M229 437h1M235 437h1M241 437h1M247 437h1M253 437h1M259 437h1M265 437h1M271 437h1M277 437h1M283 437h1M289 437h1M295 437h1M301 437h1M307 437h1M313 437h1M319 437h1M325 437h1M331 437h1M337 437h1M343 437h1M349 437h1M355 437h1M361 437h1M126 442v1M126 448v1M126 454v1M126 460v1M126 466v1M126 472v1M126 478v1M126 484v1M126 490v1M126 496v1M126 502v1M126 508v1M126 514v1M126 520v1M174 442v1M174 448v1M174 454v1M174 460v1M174 466v1M174 472v1M174 478v1M174 484v1M174 490v1M174 496v1M174 502v1M174 508v1M174 514v1M174 520v1M220 442v1M220 448v1M220 454v1M220 460v1M220 466v1M220 472v1M220 478v1M220 484v1M220 490v1M220 496v1M220 502v1M220 508v1M220 514v1M220 520v1M268 442v1M268 448v1M268 454v1M268 460v1M268 466v1M268 472v1M268 478v1M268 484v1M268 490v1M268 496v1M268 502v1M268 508v1M268 514v1M268 520v1M314 442v1M314 448v1M314 454v1M314 460v1M314 466v1M314 472v1M314 478v1M314 484v1M314 490v1M314 496v1M314 502v1M314 508v1M314 514v1M314 520v1M362 442v1M362 448v1M362 454v1M362 460v1M362 466v1M362 472v1M362 478v1M362 484v1M362 490v1M362 496v1M362 502v1M362 508v1M362 514v1M362 520v1" stroke="#000" stroke-width="1" fill="none" shape-rendering="crispEdges" transform="translate(0.5,0)"/><path d="M79.5 436V523.5H362M75 523.5h9M79 514.5h5M75 506.5h9M79 497.5h5M75 489.5h9M79 480.5h5M75 471.5h9M79 463.5h5M75 454.5h9M79 446.5h5M75 437.5h9M80.5 523V518M103.5 523V520M126.5 523V518M150.5 523V520M174.5 523V518M197.5 523V520M220.5 523V518M244.5 523V520M268.5 523V518M291.5 523V520M314.5 523V518M338.5 523V520M362.5 523V518" stroke="#000" stroke-width="1" fill="none" shape-rendering="crispEdges"/><text x="75" y="528.0" font-family="Liberation Serif" font-size="14" text-anchor="end" fill="#000">0</text><text x="75" y="510.8" font-family="Liberation Serif" font-size="14" text-anchor="end" fill="#000">20</text><text x="75" y="493.6" font-family="Liberation Serif" font-size="14" text-anchor="end" fill="#000">40</text><text x="75" y="476.4" font-family="Liberation Serif" font-size="14" text-anchor="end" fill="#000">60</text><text x="75" y="459.2" font-family="Liberation Serif" font-size="14" text-anchor="end" fill="#000">80</text><text x="75" y="442.0" font-family="Liberation Serif" font-size="14" text-anchor="end" fill="#000">100</text><text x="79.5" y="545" font-family="Liberation Serif" font-size="14" text-anchor="middle" fill="#000">400</text><text x="126.5" y="545" font-family="Liberation Serif" font-size="14" text-anchor="middle" fill="#000">500</text><text x="173.5" y="545" font-family="Liberation Serif" font-size="14" text-anchor="middle" fill="#000">600</text><text x="220.5" y="545" font-family="Liberation Serif" font-size="14" text-anchor="middle" fill="#000">700</text><text x="267.5" y="545" font-family="Liberation Serif" font-size="14" text-anchor="middle" fill="#000">800</text><text x="314.5" y="545" font-family="Liberation Serif" font-size="14" text-anchor="middle" fill="#000">900</text><text x="361.5" y="545" font-family="Liberation Serif" font-size="14" text-anchor="middle" fill="#000">1000</text><polyline points="78.9,484.6 79.7,493.2 82.0,492.4 82.8,476.8 83.6,459.6 84.5,458.0 85.1,444.8 86.2,445.6 86.7,459.6 87.5,476.8 89.0,490.8 90.6,493.2 92.2,489.3 93.7,476.8 94.5,459.6 95.7,444.0 96.8,444.8 98.1,461.2 99.2,476.8 100.7,492.4 102.3,494.7 103.9,492.4 105.4,475.2 106.2,459.6 107.4,442.5 108.5,444.0 109.3,461.2 110.9,476.8 113.2,495.5 114.8,500.2 117.1,497.0 118.7,476.8 119.5,461.2 120.6,441.7 121.8,444.0 122.6,461.2 124.1,481.5 125.7,501.8 128.0,508.8 129.6,506.4 130.8,492.4 131.9,491.6 133.0,440.9 134.3,490.8 135.0,500.2 136.6,517.4 139.0,522.0 143.6,523.3 173.5,523.0 201.7,523.0 207.3,522.1 212.0,519.6 214.9,514.8 217.2,509.2 218.6,504.9 219.6,494.6 220.5,485.2 221.4,471.4 222.4,460.2 223.8,449.0 224.7,444.7 226.6,441.3 228.5,441.3 230.8,443.0 233.2,443.9 236.0,443.9 239.3,442.2 243.1,439.6 245.9,438.7 253.4,439.1 264.7,438.7 272.2,437.4 279.7,436.6 286.3,437.4 291.9,438.3 298.5,439.6 304.6,440.0 309.8,439.1 314.5,438.7 328.6,439.1 342.7,439.1 361.5,440.0" fill="none" stroke="#0000ff" stroke-width="2" stroke-linejoin="round"/></g></svg></body></html>
